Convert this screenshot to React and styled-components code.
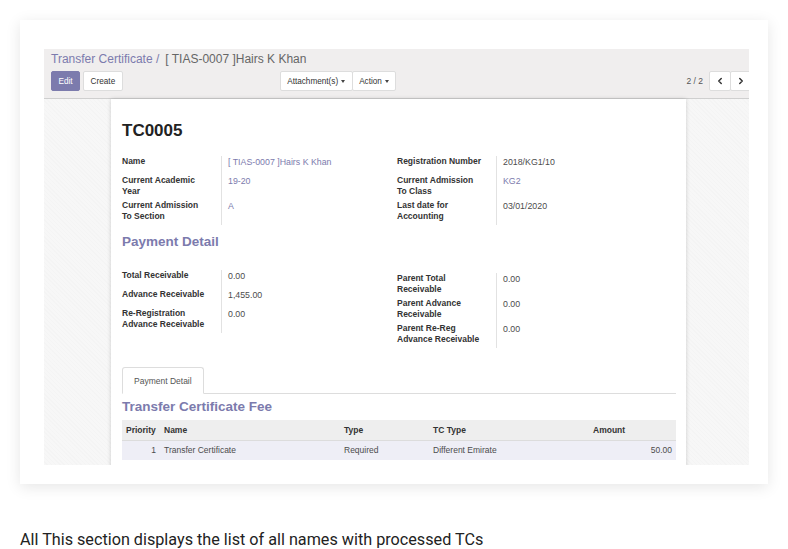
import React from "react";
import styled, { createGlobalStyle } from "styled-components";
import { ChevronLeft, ChevronRight } from "lucide-react";

const purple = "#7c7bad";

const GlobalStyle = createGlobalStyle`
  html, body {
    margin: 0;
    padding: 0;
    background: #fff;
  }
  * {
    box-sizing: border-box;
  }
`;

const Page = styled.div`
  width: 788px;
  height: 549px;
  padding: 20px 20px 0;
  font-family: "Liberation Sans", Arial, sans-serif;
`;

const Card = styled.div`
  width: 748px;
  height: 464px;
  padding: 29px 19px 19px 24px;
  background: #fff;
  box-shadow: 0 3px 14px rgba(0, 0, 0, 0.1);
`;

const Shot = styled.div`
  width: 705px;
  height: 416px;
  overflow: hidden;
  display: flex;
  flex-direction: column;
  background: #fff;
`;

const ControlPanel = styled.div`
  height: 50px;
  flex-shrink: 0;
  background: #f0eeee;
  border-bottom: 1px solid #cfcfcf;
  padding: 0 0 0 7px;
`;

const Breadcrumb = styled.div`
  height: 20px;
  font-size: 12px;
  line-height: 20px;
  color: #666;
  white-space: nowrap;
`;

const Crumb = styled.span`
  color: ${purple};
  margin-right: 6px;
`;

const ButtonRow = styled.div`
  display: flex;
  align-items: center;
  margin-top: 2px;
  height: 20px;
`;

const Group = styled.div`
  display: flex;
  margin-left: ${(p) => p.$ml || 0}px;
`;

const Btn = styled.button`
  height: 20px;
  padding: 0 ${(p) => p.$px || 6.5}px;
  font-family: "Liberation Sans", Arial, sans-serif;
  font-size: 8.2px;
  border-radius: 2px;
  border: 1px solid ${(p) => (p.$primary ? purple : "#ddd")};
  background: ${(p) => (p.$primary ? purple : "#fff")};
  color: ${(p) => (p.$primary ? "#fff" : "#333")};
  margin-right: ${(p) => p.$mr || 0}px;
  display: flex;
  align-items: center;
  gap: 3px;
  & + & {
    margin-left: -1px;
  }
`;

const Caret = styled.span`
  width: 0;
  height: 0;
  border-left: 2.5px solid transparent;
  border-right: 2.5px solid transparent;
  border-top: 3px solid #444;
`;

const Pager = styled.div`
  margin-left: auto;
  margin-right: -3px;
  display: flex;
  align-items: center;
`;

const PagerValue = styled.span`
  font-size: 8.5px;
  color: #555;
  margin-right: 6px;
`;

const Content = styled.div`
  flex: 1;
  background-color: #f7f7f7;
  background-image: repeating-linear-gradient(
    45deg,
    rgba(0, 0, 0, 0.012) 0 1px,
    transparent 1px 3px
  );
  padding-left: 67px;
`;

const Sheet = styled.div`
  width: 575px;
  min-height: 380px;
  background: #fff;
  box-shadow: 0 0 4px rgba(0, 0, 0, 0.18);
  padding: 21px 10px 0 11px;
  color: #4c4c4c;
`;

const Title = styled.h1`
  margin: 0;
  font-size: 17px;
  line-height: 22px;
  font-weight: bold;
  color: #222;
`;

const FieldGroups = styled.div`
  display: grid;
  grid-template-columns: 275px 1fr;
  margin-top: ${(p) => p.$mt || 0}px;
`;

const FieldTable = styled.div`
  display: grid;
  grid-template-columns: 100px 1fr;
  align-content: start;
  padding-top: ${(p) => p.$pt || 0}px;
`;

const Label = styled.div`
  font-size: 8.5px;
  font-weight: bold;
  line-height: 11px;
  color: #333;
  padding-bottom: 3px;
  padding-right: 12px;
  border-right: 1px solid #e2e2e2;
`;

const Value = styled.div`
  font-size: 8.8px;
  line-height: 12px;
  min-height: 19px;
  padding: 0 0 3px 6px;
  color: ${(p) => (p.$link ? purple : "#4c4c4c")};
`;

const SectionTitle = styled.h2`
  margin: ${(p) => p.$m};
  font-size: 13.5px;
  line-height: 18px;
  font-weight: bold;
  color: ${purple};
`;

const Tabs = styled.div`
  margin-top: 19px;
  border-bottom: 1px solid #ddd;
  display: flex;
`;

const Tab = styled.div`
  height: 27px;
  padding: 0 11px;
  margin-bottom: -1px;
  border: 1px solid #ddd;
  border-bottom-color: #fff;
  border-radius: 3px 3px 0 0;
  background: #fff;
  font-size: 8.5px;
  line-height: 26px;
  color: #555;
`;

const Table = styled.table`
  width: 100%;
  border-collapse: collapse;
  margin-top: 4px;
  font-size: 8.5px;
`;

const Th = styled.th`
  height: 20px;
  padding: 0 4px;
  text-align: left;
  font-weight: bold;
  color: #333;
  background: #eeeeee;
  border-bottom: 1px solid #dcdcdc;
  width: ${(p) => p.$w || "auto"};
`;

const Td = styled.td`
  height: 20px;
  padding: 0 4px;
  color: #4c4c4c;
  background: #eeeef6;
  text-align: ${(p) => (p.$right ? "right" : "left")};
`;

const Caption = styled.p`
  margin: 46px 0 0;
  font-family: Roboto, "Liberation Sans", sans-serif;
  font-size: 16.2px;
  line-height: 20px;
  color: #222;
`;

const studentLeft = [
  ["Name", "[ TIAS-0007 ]Hairs K Khan", true],
  ["Current Academic Year", "19-20", true],
  ["Current Admission To Section", "A", true],
];

const studentRight = [
  ["Registration Number", "2018/KG1/10", false],
  ["Current Admission To Class", "KG2", true],
  ["Last date for Accounting", "03/01/2020", false],
];

const paymentLeft = [
  ["Total Receivable", "0.00"],
  ["Advance Receivable", "1,455.00"],
  ["Re-Registration Advance Receivable", "0.00"],
];

const paymentRight = [
  ["Parent Total Receivable", "0.00"],
  ["Parent Advance Receivable", "0.00"],
  ["Parent Re-Reg Advance Receivable", "0.00"],
];

const Fields = ({ rows, pt }) => (
  <FieldTable $pt={pt}>
    {rows.map(([label, value, link]) => (
      <React.Fragment key={label}>
        <Label>{label}</Label>
        <Value $link={link}>{value}</Value>
      </React.Fragment>
    ))}
  </FieldTable>
);

const App = () => {
  return (
    <Page>
      <GlobalStyle />
      <Card>
        <Shot>
          <ControlPanel>
            <Breadcrumb>
              <Crumb>Transfer Certificate /</Crumb>[ TIAS-0007 ]Hairs K Khan
            </Breadcrumb>
            <ButtonRow>
              <Btn $primary $mr={4}>Edit</Btn>
              <Btn>Create</Btn>
              <Group $ml={157}>
                <Btn>
                  Attachment(s) <Caret />
                </Btn>
                <Btn>
                  Action <Caret />
                </Btn>
              </Group>
              <Pager>
                <PagerValue>2 / 2</PagerValue>
                <Btn $px={5}>
                  <ChevronLeft size={10} strokeWidth={3.5} color="#333" />
                </Btn>
                <Btn $px={5}>
                  <ChevronRight size={10} strokeWidth={3.5} color="#333" />
                </Btn>
              </Pager>
            </ButtonRow>
          </ControlPanel>
          <Content>
            <Sheet>
              <Title>TC0005</Title>
              <FieldGroups $mt={14}>
                <Fields rows={studentLeft} />
                <Fields rows={studentRight} />
              </FieldGroups>
              <SectionTitle $m="8px 0 0">Payment Detail</SectionTitle>
              <FieldGroups $mt={19}>
                <Fields rows={paymentLeft} />
                <Fields rows={paymentRight} pt={3} />
              </FieldGroups>
              <Tabs>
                <Tab>Payment Detail</Tab>
              </Tabs>
              <SectionTitle $m="4px 0 0">Transfer Certificate Fee</SectionTitle>
              <Table>
                <thead>
                  <tr>
                    <Th $w="38px">Priority</Th>
                    <Th $w="180px">Name</Th>
                    <Th $w="89px">Type</Th>
                    <Th $w="160px">TC Type</Th>
                    <Th>Amount</Th>
                  </tr>
                </thead>
                <tbody>
                  <tr>
                    <Td $right>1</Td>
                    <Td>Transfer Certificate</Td>
                    <Td>Required</Td>
                    <Td>Different Emirate</Td>
                    <Td $right>50.00</Td>
                  </tr>
                </tbody>
              </Table>
            </Sheet>
          </Content>
        </Shot>
      </Card>
      <Caption>All This section displays the list of all names with processed TCs</Caption>
    </Page>
  );
};

export default App;
